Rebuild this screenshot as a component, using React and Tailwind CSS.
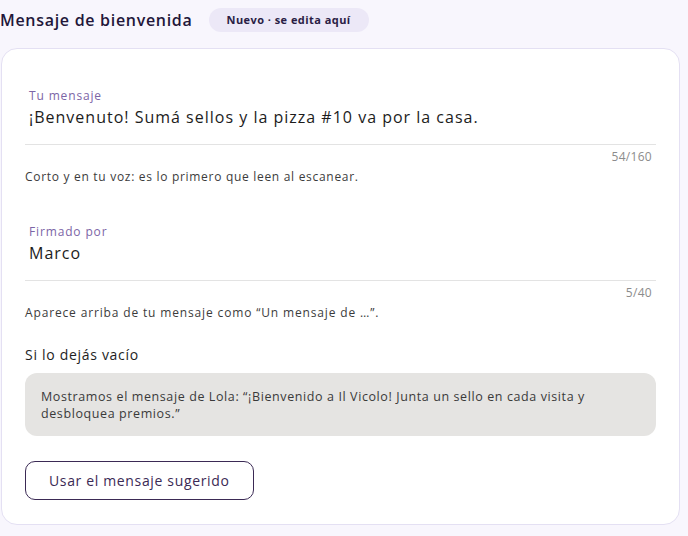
export default function App() {
  const font = { fontFamily: '"Open Sans", "Noto Sans", sans-serif' };
  return (
    <div className="w-[688px] h-[536px] bg-[#f8f6fd] pr-[8px] overflow-hidden" style={font}>
      <div className="h-[40px] flex items-center gap-4">
        <h1 className="text-[16px] font-semibold text-[#23173a] leading-6 tracking-[0.7px]">Mensaje de bienvenida</h1>
        <span className="h-6 px-[18px] rounded-full bg-[#ece8f7] text-[#2a1d45] text-[11px] font-bold flex items-center tracking-[0.45px]">Nuevo · se edita aquí</span>
      </div>
      <div className="mt-2 ml-px border border-[#e4e0f3] rounded-[16px] bg-white px-[23px] pt-[39px] pb-6">
        <Field label="Tu mensaje" value="¡Benvenuto! Sumá sellos y la pizza #10 va por la casa." count="54/160" help="Corto y en tu voz: es lo primero que leen al escanear." helpTrack="tracking-[0.7px]" />
        <div className="h-[39px]" />
        <Field label="Firmado por" value="Marco" count="5/40" help="Aparece arriba de tu mensaje como “Un mensaje de …”." helpTrack="tracking-[0.85px]" />
        <div className="mt-6 text-[14px] leading-5 font-medium text-[#1e1e1e] tracking-[0.7px]">Si lo dejás vacío</div>
        <div className="mt-2 rounded-[12px] bg-[#e5e4e2] px-4 py-[14.5px] text-[12.5px] leading-[17px] text-[#3a3a3a] tracking-[0.6px]">
          Mostramos el mensaje de Lola: “¡Bienvenido a Il Vicolo! Junta un sello en cada visita y desbloquea premios.”
        </div>
        <button className="mt-[25px] h-[39px] px-[23px] rounded-[10px] border border-[#3b2a55] text-[14px] font-medium text-[#3b2a55] bg-white tracking-[0.65px]">
          Usar el mensaje sugerido
        </button>
      </div>
    </div>
  );
}

function Field({ label, value, count, help, helpTrack }) {
  return (
    <div>
      <div className="px-1">
        <div className="text-[12px] leading-4 font-medium text-[#7c65a6] tracking-[0.85px]">{label}</div>
        <div className="mt-px text-[16px] leading-6 text-[#1c1c1c] tracking-[1px]">{value}</div>
      </div>
      <div className="mt-[15px] border-t border-[#e3e3e3]" />
      <div className="mt-1 pr-1 text-right text-[12px] leading-4 text-[#8c8c8c] tracking-[0.3px]">{count}</div>
      <div className={"mt-1 text-[12px] leading-4 text-[#3c3c3c] " + helpTrack}>{help}</div>
    </div>
  );
}
